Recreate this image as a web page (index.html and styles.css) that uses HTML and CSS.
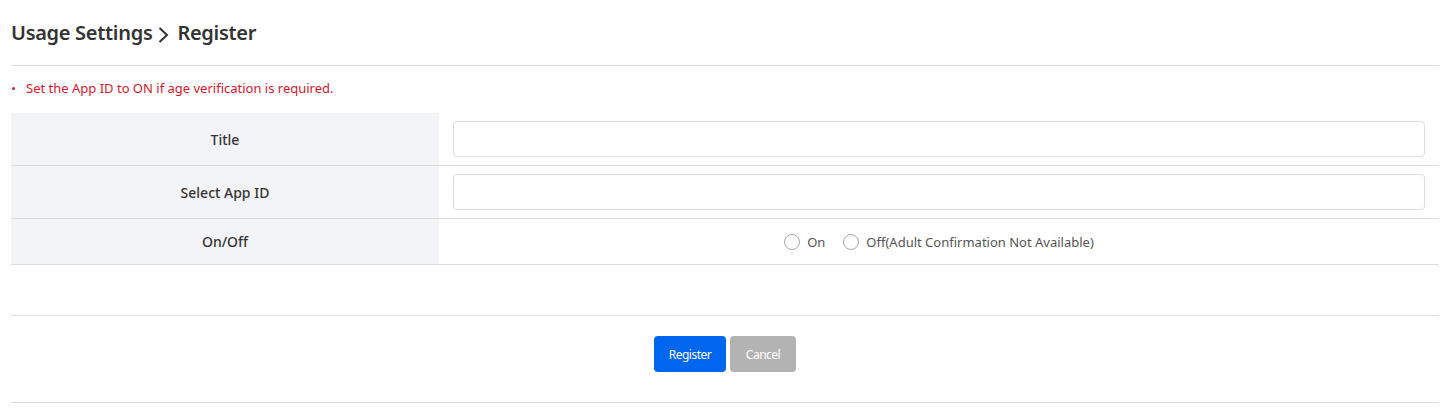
FILE: index.html
```html
<!DOCTYPE html>
<html>
<head>
<meta charset="utf-8">
<link rel="stylesheet" href="styles.css">
</head>
<body>
<div class="page">
  <h1 class="page-title">Usage Settings <span class="chev"><svg width="11" height="18" viewBox="0 0 11 18"><path d="M1.5 2 L9 9 L1.5 16" fill="none" stroke="#333" stroke-width="2"/></svg></span>Register</h1>
  <ul class="notice">
    <li>Set the App ID to ON if age verification is required.</li>
  </ul>
  <div class="form-table">
    <div class="row row-input">
      <div class="label">Title</div>
      <div class="field"><input class="text-input" type="text"></div>
    </div>
    <div class="row row-input">
      <div class="label">Select App ID</div>
      <div class="field"><input class="text-input" type="text"></div>
    </div>
    <div class="row row-radio">
      <div class="label">On/Off</div>
      <div class="field radios">
        <label class="radio"><span class="circle"></span>On</label>
        <label class="radio"><span class="circle"></span>Off(Adult Confirmation Not Available)</label>
      </div>
    </div>
  </div>
  <div class="actions">
    <button class="btn btn-primary">Register</button>
    <button class="btn btn-gray">Cancel</button>
  </div>
</div>
</body>
</html>
```

FILE: styles.css
```css
* { box-sizing: border-box; }
body {
  margin: 0;
  font-family: "Noto Sans", "Open Sans", sans-serif;
  color: #333;
  background: #fff;
}
.page {
  padding: 0 11px;
}
.page-title {
  margin: 0;
  height: 66px;
  padding-top: 19px;
  font-size: 20px;
  font-weight: 600;
  color: #333;
  border-bottom: 1px solid #ddd;
  letter-spacing: -0.3px;
  display: flex;
  align-items: flex-start;
  white-space: pre;
}
.chev {
  display: inline-flex;
  padding-top: 7px;
  margin: 0 8px 0 1px;
}
.notice {
  list-style: none;
  margin: 0;
  padding: 13px 0 0 0;
  height: 47px;
}
.notice li {
  position: relative;
  padding-left: 15px;
  font-size: 13px;
  color: #d7162d;
  line-height: 18px;
}
.notice li::before {
  content: "";
  position: absolute;
  left: 1px;
  top: 8px;
  width: 3px;
  height: 3px;
  background: #d7162d;
  border-radius: 50%;
}
.form-table {
  border-bottom: 1px solid #ddd;
}
.row {
  display: flex;
  border-top: 1px solid #ddd;
}
.row:first-child { border-top: 0; }
.row-input { height: 53px; }
.row:first-child.row-input { height: 52px; }
.row-radio { height: 46px; }
.label {
  width: 428px;
  flex: none;
  background: #f3f4f8;
  display: flex;
  align-items: center;
  justify-content: center;
  font-size: 14px;
  font-weight: 500;
  color: #333;
}
.field {
  flex: 1;
  display: flex;
  align-items: center;
  padding: 0 14px;
}
.text-input {
  width: 100%;
  height: 36px;
  border: 1px solid #ddd;
  border-radius: 4px;
  outline: none;
  background: #fff;
}
.radios {
  justify-content: center;
  gap: 18px;
  font-size: 13px;
  color: #555;
}
.radio {
  display: flex;
  align-items: center;
  gap: 7px;
}
.circle {
  width: 16px;
  height: 16px;
  border: 1px solid #aaa;
  border-radius: 50%;
  background: #fff;
}
.actions {
  margin-top: 50px;
  border-top: 1px solid #ddd;
  border-bottom: 1px solid #ddd;
  height: 88px;
  display: flex;
  justify-content: center;
  align-items: flex-start;
  padding-top: 20px;
  gap: 4px;
}
.btn {
  height: 36px;
  border: 0;
  border-radius: 4px;
  color: #fff;
  font-family: inherit;
  font-size: 12px;
  padding: 0 10px;
  letter-spacing: -0.5px;
}
.btn-primary { background: #0066ee; width: 72px; }
.btn-gray { background: #b3b3b3; width: 66px; }
```
